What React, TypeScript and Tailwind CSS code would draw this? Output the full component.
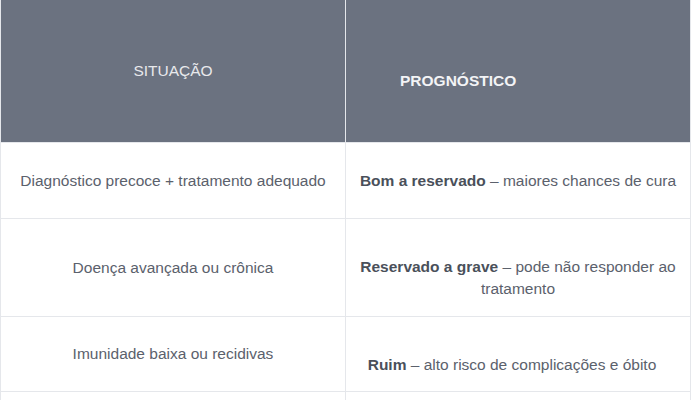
export default function App() {
  const rows = [
    {
      left: "Diagnóstico precoce + tratamento adequado",
      bold: "Bom a reservado",
      rest: " – maiores chances de cura",
      h: "h-[76px]",
      extra: "",
    },
    {
      left: "Doença avançada ou crônica",
      bold: "Reservado a grave",
      rest: " – pode não responder ao tratamento",
      h: "h-[98px]",
      extra: "pt-[21px]",
    },
    {
      left: "Imunidade baixa ou recidivas",
      bold: "Ruim",
      rest: " – alto risco de complicações e óbito",
      h: "h-[75px]",
      extra: "pt-[21px] pr-[18px]",
    },
  ];

  return (
    <div
      className="w-[691px] h-[400px] overflow-hidden bg-white text-[15.5px]"
      style={{ fontFamily: '"Liberation Sans", Arial, sans-serif' }}
    >
      <div className="grid grid-cols-[346px_345px]">
        {/* cabeçalho */}
        <div className="h-[143px] bg-[#6b7280] border-r border-b border-l border-[#e5e7eb] flex items-center justify-center text-[#e8e9ec] uppercase">
          Situação
        </div>
        <div className="h-[143px] bg-[#6b7280] border-b border-r border-[#e5e7eb] flex items-center pt-[20px] pl-[54px] text-[#f3f4f6] font-bold uppercase">
          Prognóstico
        </div>

        {rows.map((r, i) => (
          <div key={i} className="contents">
            <div
              className={`${r.h} border-r border-b border-l border-[#e5e7eb] flex items-center justify-center px-4 text-center text-[#5b616c] leading-[22px]`}
            >
              {r.left}
            </div>
            <div
              className={`${r.h} border-b border-r border-[#e5e7eb] flex items-center justify-center px-[6px] text-center text-[#5b616c] leading-[22px] ${r.extra}`}
            >
              <p>
                <strong className="font-bold text-[#4a505a]">{r.bold}</strong>
                {r.rest}
              </p>
            </div>
          </div>
        ))}

        <div className="h-[40px] border-r border-l border-[#e5e7eb]" />
        <div className="h-[40px] border-r border-[#e5e7eb]" />
      </div>
    </div>
  );
}
